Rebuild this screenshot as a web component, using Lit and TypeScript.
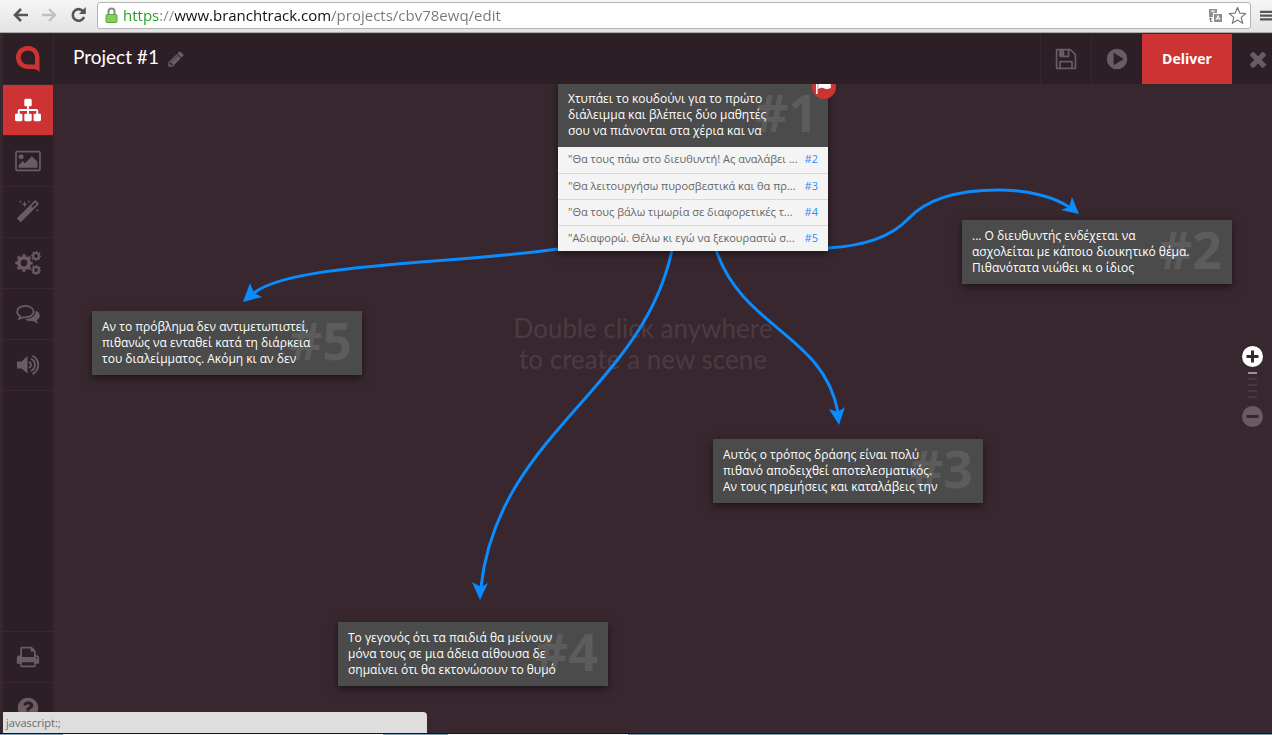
import { LitElement, html, svg, css } from "lit";
import { customElement, property } from "lit/decorators.js";
import { classMap } from "lit/directives/class-map.js";
import { styleMap } from "lit/directives/style-map.js";

interface Answer {
  text: string;
  target: number;
}

interface Scene {
  id: number;
  x: number;
  y: number;
  lines: string[];
  start?: boolean;
  answers?: Answer[];
}

const SCENES: Scene[] = [
  {
    id: 1, x: 505, y: -1, start: true,
    lines: ["Χτυπάει το κουδούνι για το πρώτο", "διάλειμμα και βλέπεις δύο μαθητές", "σου να πιάνονται στα χέρια και να"],
    answers: [
      { text: "\"Θα τους πάω στο διευθυντή! Ας αναλάβει ...", target: 2 },
      { text: "\"Θα λειτουργήσω πυροσβεστικά και θα πρ...", target: 3 },
      { text: "\"Θα τους βάλω τιμωρία σε διαφορετικές τ...", target: 4 },
      { text: "\"Αδιαφορώ. Θέλω κι εγώ να ξεκουραστώ σ...", target: 5 },
    ],
  },
  { id: 2, x: 909, y: 136, lines: ["... Ο διευθυντής ενδέχεται να", "ασχολείται με κάποιο διοικητικό θέμα.", "Πιθανότατα νιώθει κι ο ίδιος"] },
  { id: 3, x: 660, y: 355, lines: ["Αυτός ο τρόπος δράσης είναι πολύ", "πιθανό αποδειχθεί αποτελεσματικός.", "Αν τους ηρεμήσεις και καταλάβεις την"] },
  { id: 4, x: 285, y: 538, lines: ["Το γεγονός ότι τα παιδιά θα μείνουν", "μόνα τους σε μια άδεια αίθουσα δε", "σημαίνει ότι θα εκτονώσουν το θυμό"] },
  { id: 5, x: 39, y: 227, lines: ["Αν το πρόβλημα δεν αντιμετωπιστεί,", "πιθανώς να ενταθεί κατά τη διάρκεια", "του διαλείμματος. Ακόμη κι αν δεν"] },
];

const LINKS = [
  { line: "M505 165C400 180 238 179 201 209", head: "190,218 197,199 201,209 209,213" },
  { line: "M775 164C812 162 838 153 855 135C870 119 896 106 945 106C975 106 1001 113 1016 123", head: "1026,130 1019,113 1016,123 1008,126" },
  { line: "M619 166C590 305 445 350 428 503", head: "427,516 419,498 428,503 435,499" },
  { line: "M663 166C690 245 770 250 785 328", head: "786,341 776,325 785,328 792,323" },
];

const box = "0 0 1792 1792";

const ICONS: Record<string, unknown> = {
  sitemap: svg`<svg viewBox=${box} width="26" height="26"><path d="M1792 1248v320q0 40-28 68t-68 28h-320q-40 0-68-28t-28-68v-320q0-40 28-68t68-28h96v-192h-512v192h96q40 0 68 28t28 68v320q0 40-28 68t-68 28h-320q-40 0-68-28t-28-68v-320q0-40 28-68t68-28h96v-192h-512v192h96q40 0 68 28t28 68v320q0 40-28 68t-68 28h-320q-40 0-68-28t-28-68v-320q0-40 28-68t68-28h96v-192q0-52 38-90t90-38h512v-192h-96q-40 0-68-28t-28-68v-320q0-40 28-68t68-28h320q40 0 68 28t28 68v320q0 40-28 68t-68 28h-96v192h512q52 0 90 38t38 90v192h96q40 0 68 28t28 68z"/></svg>`,
  picture: svg`<svg viewBox="-64 0 1920 1792" width="26" height="24"><path d="M576 576q0 80-56 136t-136 56-136-56-56-136 56-136 136-56 136 56 56 136zm1024 384v448h-1408v-192l320-320 160 160 512-512zm96-704h-1600q-13 0-22.5 9.5t-9.5 22.5v1216q0 13 9.5 22.5t22.5 9.5h1600q13 0 22.5-9.5t9.5-22.5v-1216q0-13-9.5-22.5t-22.5-9.5zm160 32v1216q0 66-47 113t-113 47h-1600q-66 0-113-47t-47-113v-1216q0-66 47-113t113-47h1600q66 0 113 47t47 113z"/></svg>`,
  magic: svg`<svg viewBox=${box} width="24" height="24"><path d="M1254 581l293-293-107-107-293 293zm447-293q0 27-18 45l-1286 1286q-18 18-45 18t-45-18l-198-198q-18-18-18-45t18-45l1286-1286q18-18 45-18t45 18l198 198q18 18 18 45zm-1351-190l98 30-98 30-30 98-30-98-98-30 98-30 30-98zm350 162l196 60-196 60-60 196-60-196-196-60 196-60 60-196zm930 478l98 30-98 30-30 98-30-98-98-30 98-30 30-98zm-640-640l98 30-98 30-30 98-30-98-98-30 98-30 30-98z"/></svg>`,
  cogs: svg`<svg viewBox="0 0 26 24" width="26" height="24" fill="none" stroke="currentColor"><circle cx="9" cy="12" r="5.2" stroke-width="3.6"/><circle cx="9" cy="12" r="7.6" stroke-width="2.4" stroke-dasharray="2.98 2.98" stroke-dashoffset="1.5"/><circle cx="21" cy="5" r="2.9" stroke-width="2"/><circle cx="21" cy="5" r="4.2" stroke-width="1.6" stroke-dasharray="1.65 1.65" stroke-dashoffset=".8"/><circle cx="21" cy="19" r="2.9" stroke-width="2"/><circle cx="21" cy="19" r="4.2" stroke-width="1.6" stroke-dasharray="1.65 1.65" stroke-dashoffset=".8"/></svg>`,
  comments: svg`<svg viewBox="0 0 24 24" width="24" height="24"><path d="M9.4 3.9C4.7 3.9 1.2 6.400 1.200 9.700c0 2 1.300 3.700 3.300 4.700-.2.900-.9 1.700-1.500 2.400 2 0 3.500-.8 4.500-1.600.6.100 1.200.1 1.900.1 4.700 0 8.200-2.400 8.200-5.600s-3.500-5.800-8.200-5.800z" fill="none" stroke="currentColor" stroke-width="1.7"/><path d="M19.600 8.500c2.500 1 4.200 2.900 4.200 5.100 0 1.900-1.200 3.500-3.200 4.600.3 1.200 1.200 2 1.900 2.900-2.300 0-4.100-.9-5.400-2.100-3.400.4-6.200-.3-8.300-1.800 5.800.2 10.600-2.600 10.800-7.600z"/></svg>`,
  volume: svg`<svg viewBox="0 0 24 24" width="24" height="24"><path d="M1 8.500h4.500L11.500 3v17.500L5.500 15.500H1z"/><path d="M13.500 9.200c2 1 2 4.200 0 5.400M15.500 6c4.600 2.500 4.600 9 0 11.700M17 3c7 4 7 13.700 0 17.700" fill="none" stroke="currentColor" stroke-width="1.8" stroke-linecap="round"/></svg>`,
  print: svg`<svg viewBox=${box} width="24" height="24"><path d="M448 1536h896v-256h-896v256zm0-640h896v-384h-160q-40 0-68-28t-28-68v-160h-640v640zm1152 64q0-26-19-45t-45-19-45 19-19 45 19 45 45 19 45-19 19-45zm128 0v416q0 13-9.500 22.500t-22.500 9.500h-224v160q0 40-28 68t-68 28h-960q-40 0-68-28t-28-68v-160h-224q-13 0-22.500-9.500t-9.500-22.500v-416q0-79 56.500-135.500t135.500-56.500h64v-544q0-40 28-68t68-28h672q40 0 88 20t76 48l152 152q28 28 48 76t20 88v256h64q79 0 135.500 56.500t56.500 135.500z"/></svg>`,
  help: svg`<svg viewBox=${box} width="24" height="24"><path d="M1024 1376v-192q0-14-9-23t-23-9h-192q-14 0-23 9t-9 23v192q0 14 9 23t23 9h192q14 0 23-9t9-23zm256-672q0-88-55.500-163t-138.500-116-170-41q-243 0-371 213-15 24 8 42l132 100q7 6 19 6 16 0 25-12 53-68 86-92 34-24 86-24 48 0 85.500 26t37.500 59q0 38-20 61t-68 45q-63 28-115.500 86.500t-52.500 125.500v36q0 14 9 23t23 9h192q14 0 23-9t9-23q0-19 21.500-49.500t54.500-49.500q32-18 49-28.500t46-35 44.500-48 28-60.500 12.500-81zm384 192q0 209-103 385.500t-279.500 279.500-385.500 103-385.500-103-279.500-279.500-103-385.500 103-385.500 279.500-279.500 385.500-103 385.500 103 279.500 279.500 103 385.500z"/></svg>`,
  pencil: svg`<svg viewBox=${box} width="18" height="18"><path d="M491 1536l91-91-235-235-91 91v107h128v128h107zm523-928q0-22-22-22-10 0-17 7l-542 542q-7 7-7 17 0 22 22 22 10 0 17-7l542-542q7-7 7-17zm-54-192l416 416-832 832h-416v-416zm683 96q0 53-37 90l-166 166-416-416 166-165q36-38 90-38 53 0 91 38l235 234q37 39 37 91z"/></svg>`,
  save: svg`<svg viewBox=${box} width="24" height="24"><path d="M512 1536h768v-384h-768v384zm896 0h128v-896q0-14-10-38.500t-20-34.500l-281-281q-10-10-34-20t-39-10v416q0 40-28 68t-68 28h-576q-40 0-68-28t-28-68v-416h-128v1280h128v-416q0-40 28-68t68-28h832q40 0 68 28t28 68v416zm-384-928v-320q0-13-9.500-22.500t-22.500-9.500h-192q-13 0-22.500 9.500t-9.500 22.500v320q0 13 9.500 22.500t22.500 9.500h192q13 0 22.500-9.500t9.500-22.500zm640 32v928q0 40-28 68t-68 28h-1344q-40 0-68-28t-28-68v-1344q0-40 28-68t68-28h928q40 0 88 20t76 48l280 280q28 28 48 76t20 88z"/></svg>`,
  play: svg`<svg viewBox="0 0 24 24" width="24" height="24"><path fill-rule="evenodd" d="M12 1.700a10.300 10.300 0 1 0 0 20.600a10.300 10.300 0 1 0 0-20.600zM8.600 6.700q0-.9.800-.5l8.600 5.200q.8.600 0 1.200l-8.600 5.200q-.8.400-.8-.5z"/></svg>`,
  close: svg`<svg viewBox=${box} width="24" height="24"><path d="M1490 1322q0 40-28 68l-136 136q-28 28-68 28t-68-28l-294-294-294 294q-28 28-68 28t-68-28l-136-136q-28-28-28-68t28-68l294-294-294-294q-28-28-28-68t28-68l136-136q28-28 68-28t68 28l294 294 294-294q28-28 68-28t68 28l136 136q28 28 28 68t-28 68l-294 294 294 294q28 28 28 68z"/></svg>`,
  logo: svg`<svg viewBox="0 0 24 26" width="24" height="26"><path fill-rule="evenodd" d="M12 0C5 0 0 5 0 11.500S5 23 12 23h6q3 0 5.500 3V11.500C23.500 5 19 0 12 0zM12 4.500c4 0 7 3 7 7V18.500h-7c-4 0-7.200-3-7.200-7s3.200-7 7.200-7z"/></svg>`,
  flag: svg`<svg viewBox="0 0 16 16" width="16" height="16"><path d="M0 0h1.600v15H0zM2.200 1c3-1.600 4.500-1 6.400 0 2 1 3.600.9 6.200-.5v8.500c-2.600 1.400-4.200 1.400-6.200.5-1.900-.9-3.400-1.100-6.400.5z"/></svg>`,
};

const FONT = css`"Open Sans", "Noto Sans", sans-serif`;

@customElement("browser-bar")
class BrowserBar extends LitElement {
  static styles = css`
    :host {
      display: flex;
      align-items: center;
      height: 33px;
      padding: 0 0 2px 12px;
      box-sizing: border-box;
      background: linear-gradient(#f6f6f6, #e3e3e3);
      border-bottom: 1px solid #a9a9a9;
      overflow: hidden;
    }
    button {
      display: flex;
      flex: none;
      padding: 0;
      border: 0;
      background: none;
      color: #555;
    }
    svg { display: block; }
    .nav { width: 29px; }
    .reload { width: 27px; }
    .dim { color: #c0c0c0; }
    .address {
      flex: 1;
      display: flex;
      align-items: center;
      gap: 5px;
      height: 27px;
      margin-right: 9px;
      padding: 0 3px 0 7px;
      box-sizing: border-box;
      border: 1px solid #b4b4b4;
      border-radius: 3px;
      background: #fff;
    }
    .url {
      flex: 1;
      min-width: 0;
      height: 25px;
      padding: 0;
      border: 0;
      outline: 0;
      font: 15px/25px ${FONT};
      color: transparent;
      background: linear-gradient(90deg, #1f9a1f 37px, #8a8a8a 37px 52px, #111 52px 208px, #777 208px);
      -webkit-background-clip: text;
      background-clip: text;
    }
    .menu { width: 12px; }
  `;

  render() {
    return html`
      <button class="nav" aria-label="Back"><svg width="17" height="16" viewBox="0 0 17 16" fill="none" stroke="currentColor" stroke-width="2.600"><path d="M16 8H3M9 2L3 8l6 6"/></svg></button>
      <button class="nav dim" aria-label="Forward"><svg width="17" height="16" viewBox="0 0 17 16" fill="none" stroke="currentColor" stroke-width="2.400"><path d="M1 8h13M8 2l6 6-6 6"/></svg></button>
      <button class="reload" aria-label="Reload"><svg width="17" height="16" viewBox="0 0 17 16"><path d="M13 4.200A5.800 5.800 0 1 0 14 10" fill="none" stroke="currentColor" stroke-width="2.600"/><path d="M15.800 0v7H9z" fill="currentColor"/></svg></button>
      <div class="address">
        <svg width="13" height="16" viewBox="0 0 13 16"><path d="M3.500 8V4.500a3 3 0 0 1 6 0V8" fill="none" stroke="#8b8b8b" stroke-width="2"/><rect x="1" y="7.500" width="11" height="8" rx="1" fill="#84cf57" stroke="#5fa83a"/></svg>
        <input class="url" type="text" aria-label="Address" .value=${"https://www.branchtrack.com/projects/cbv78ewq/edit"} />
        <button aria-label="Translate"><svg width="15" height="15" viewBox="0 0 15 15"><path d="M1 1h8v4H5v4H1z" fill="#8f8f8f"/><path d="M3 3h4M5 3v1.500" stroke="#fff"/><rect x="6" y="6" width="8" height="8" fill="#8f8f8f"/><path d="M8 12l2-4.500L12 12M8.800 10.600h2.400" fill="none" stroke="#fff"/><path d="M1 11h3M2.500 9.500v4l2 0" fill="none" stroke="#777"/></svg></button>
        <button aria-label="Bookmark"><svg width="19" height="19" viewBox="0 0 19 19"><path d="M9.500 1.500l2.300 5.600 6 .4-4.600 3.900 1.500 5.900-5.200-3.200-5.200 3.200 1.500-5.900L1.200 7.500l6-.4z" fill="#fff" stroke="#777" stroke-width="1.200" stroke-linejoin="round"/></svg></button>
      </div>
      <button class="menu" aria-label="Menu"><svg width="16" height="13" viewBox="0 0 16 13"><path d="M0 1.500h16M0 6.500h16M0 11.500h16" stroke="#555" stroke-width="3"/></svg></button>
    `;
  }
}

@customElement("scene-card")
class SceneCard extends LitElement {
  @property({ attribute: false }) scene!: Scene;

  static styles = css`
    :host {
      display: block;
      width: 270px;
      font-family: ${FONT};
      box-shadow: 0 3px 8px rgba(0, 0, 0, 0.5);
    }
    .head {
      position: relative;
      padding: 8px 10px;
      background: #4b4b4b;
    }
    .number {
      position: absolute;
      right: 10px;
      top: 0;
      font-size: 52px;
      line-height: 58px;
      font-weight: 700;
      color: #5c5c5c;
    }
    .text {
      position: relative;
      margin: 0;
      font-size: 12px;
      line-height: 16px;
      font-weight: 500;
      color: #fff;
      white-space: nowrap;
    }
    .line { display: block; }
    .flag {
      position: absolute;
      right: -8px;
      top: -8px;
      display: flex;
      align-items: center;
      justify-content: center;
      width: 24px;
      height: 24px;
      border-radius: 50%;
      background: #cd3333;
      color: #fff;
      fill: currentColor;
    }
    .answers {
      margin: 0;
      padding: 0;
      list-style: none;
      background: #f4f4f4;
    }
    .answer {
      display: flex;
      justify-content: space-between;
      height: 26px;
      padding: 0 10px;
      box-sizing: border-box;
      border-top: 1px solid #d8d8d8;
      font-size: 11px;
      line-height: 24px;
      color: #666;
      white-space: nowrap;
    }
    .answer:first-child { border-top: 0; }
    a {
      color: #1e90ff;
      text-decoration: none;
    }
  `;

  render() {
    const s = this.scene;
    return html`
      <div class="head">
        <span class="number">#${s.id}</span>
        <p class="text">${s.lines.map((l) => html`<span class="line">${l}</span>`)}</p>
        ${s.start ? html`<span class="flag">${ICONS.flag}</span>` : ""}
      </div>
      ${s.answers
        ? html`<ul class="answers">
            ${s.answers.map((a) => html`<li class="answer"><span>${a.text}</span><a href="#${a.target}">#${a.target}</a></li>`)}
          </ul>`
        : ""}
    `;
  }
}

@customElement("scene-canvas")
class SceneCanvas extends LitElement {
  static styles = css`
    :host {
      display: flex;
      justify-content: center;
      position: relative;
      overflow: hidden;
      background: #38272f;
      font-family: ${FONT};
    }
    .hint {
      margin: 229px 39px 0 0;
      font: 26px/31px Lato, sans-serif;
      color: #4b3b43;
      text-align: center;
      white-space: pre-line;
    }
    .links {
      position: absolute;
      left: 0;
      top: 0;
      width: 100%;
      height: 100%;
      fill: none;
      stroke: #0a8cff;
      stroke-width: 3;
    }
    .tip {
      fill: #0a8cff;
      stroke: none;
    }
    .node { position: absolute; }
    .zoom {
      position: absolute;
      right: 9px;
      top: 262px;
      display: flex;
      flex-direction: column;
      align-items: center;
      gap: 5px;
    }
    .zoom button {
      display: flex;
      padding: 0;
      border: 0;
      border-radius: 50%;
      background: #fff;
      color: #38272f;
    }
    .zoom .out { background: #6a5a62; }
    .ticks {
      display: grid;
      gap: 4px;
      padding: 0 0 3px;
    }
    .tick {
      width: 9px;
      height: 2px;
      background: #47383f;
    }
    .on { background: #9b9196; }
  `;

  render() {
    return html`
      <p class="hint">Double click anywhere
to create a new scene</p>
      <svg class="links">
        ${LINKS.map((l) => svg`<path d=${l.line} /><polygon class="tip" points=${l.head} />`)}
      </svg>
      ${SCENES.map((s) => html`<scene-card class="node" .scene=${s} style=${styleMap({ left: `${s.x}px`, top: `${s.y}px` })}></scene-card>`)}
      <div class="zoom">
        <button aria-label="Zoom in"><svg width="21" height="21" viewBox="0 0 21 21"><path d="M4.500 10.500h12M10.500 4.500v12" stroke="currentColor" stroke-width="3"/></svg></button>
        <div class="ticks">${[0, 1, 2, 3, 4].map((i) => html`<span class=${classMap({ tick: true, on: i === 0 })}></span>`)}</div>
        <button class="out" aria-label="Zoom out"><svg width="21" height="21" viewBox="0 0 21 21"><path d="M4.500 10.500h12" stroke="currentColor" stroke-width="3"/></svg></button>
      </div>
    `;
  }
}

@customElement("app-root")
class AppRoot extends LitElement {
  static styles = css`
    :host {
      display: flex;
      flex-direction: column;
      height: 100vh;
      overflow: hidden;
      background: #38272f;
      font-family: ${FONT};
    }
    browser-bar { flex: none; }
    .app {
      flex: 1;
      min-height: 0;
      position: relative;
      display: flex;
      flex-direction: column;
      margin-top: 1px;
      padding-left: 3px;
    }
    button {
      display: flex;
      align-items: center;
      justify-content: center;
      padding: 0;
      border: 0;
      background: none;
      color: #6b5b63;
      fill: currentColor;
      font-family: inherit;
    }
    .header {
      flex: none;
      display: flex;
      height: 50px;
      background: #2d1f26;
    }
    .logo {
      display: flex;
      align-items: center;
      justify-content: center;
      width: 50px;
      border-right: 1px solid #38272f;
      color: #cd3333;
      fill: currentColor;
    }
    .title {
      flex: 1;
      display: flex;
      align-items: center;
      gap: 8px;
      padding-left: 19px;
    }
    h1 {
      margin: 0;
      padding-bottom: 4px;
      font: 19px/24px Lato, sans-serif;
      color: #fff;
    }
    .tool {
      width: 51px;
      border-left: 1px solid #38272f;
    }
    .deliver {
      width: 90px;
      padding-bottom: 2px;
      background: #cd3333;
      color: #fff;
      font-size: 14px;
      font-weight: 700;
    }
    .close {
      width: 40px;
      justify-content: flex-end;
      padding-right: 2px;
    }
    .body {
      flex: 1;
      min-height: 0;
      display: flex;
    }
    .side {
      flex: none;
      display: flex;
      flex-direction: column;
      width: 50px;
      background: #2d1f26;
      overflow: hidden;
    }
    .item {
      flex: none;
      height: 51px;
      border-bottom: 1px solid #38272f;
    }
    .active {
      height: 52px;
      border-top: 1px solid #38272f;
      background: #cd3333;
      color: #fff;
    }
    .push {
      height: 52px;
      margin-top: auto;
      border-top: 1px solid #38272f;
    }
    .last {
      height: 50px;
      border-bottom: 0;
    }
    scene-canvas { flex: 1; }
    .status {
      position: absolute;
      left: 3px;
      bottom: 0;
      width: 424px;
      height: 21px;
      padding-left: 3px;
      box-sizing: border-box;
      border-top-right-radius: 4px;
      background: #dedede;
      color: #6a6a6a;
      font-size: 11px;
      line-height: 21px;
    }
    .taskbar {
      flex: none;
      height: 1px;
      border-top: 1px solid #10181c;
      background: linear-gradient(90deg, #7fa3b8 63px, #f4fbf8 63px 383px, #7fa3b8 383px 448px, #f4fbf8 448px 628px, #7fa3b8 628px);
    }
  `;

  render() {
    const top = [["sitemap", "Scenes"], ["picture", "Images"], ["magic", "Theme"], ["cogs", "Settings"], ["comments", "Comments"], ["volume", "Sound"]];
    return html`
      <browser-bar></browser-bar>
      <div class="app">
        <header class="header">
          <div class="logo">${ICONS.logo}</div>
          <div class="title">
            <h1>Project #1</h1>
            <button aria-label="Rename">${ICONS.pencil}</button>
          </div>
          <button class="tool" aria-label="Save">${ICONS.save}</button>
          <button class="tool" aria-label="Preview">${ICONS.play}</button>
          <button class="deliver">Deliver</button>
          <button class="close" aria-label="Close">${ICONS.close}</button>
        </header>
        <div class="body">
          <nav class="side">
            ${top.map(([icon, label], i) => html`<button class=${classMap({ item: true, active: i === 0 })} aria-label=${label}>${ICONS[icon]}</button>`)}
            <button class="item push" aria-label="Print">${ICONS.print}</button>
            <button class="item last" aria-label="Help">${ICONS.help}</button>
          </nav>
          <scene-canvas></scene-canvas>
        </div>
        <div class="status">javascript:;</div>
      </div>
      <div class="taskbar"></div>
    `;
  }
}
